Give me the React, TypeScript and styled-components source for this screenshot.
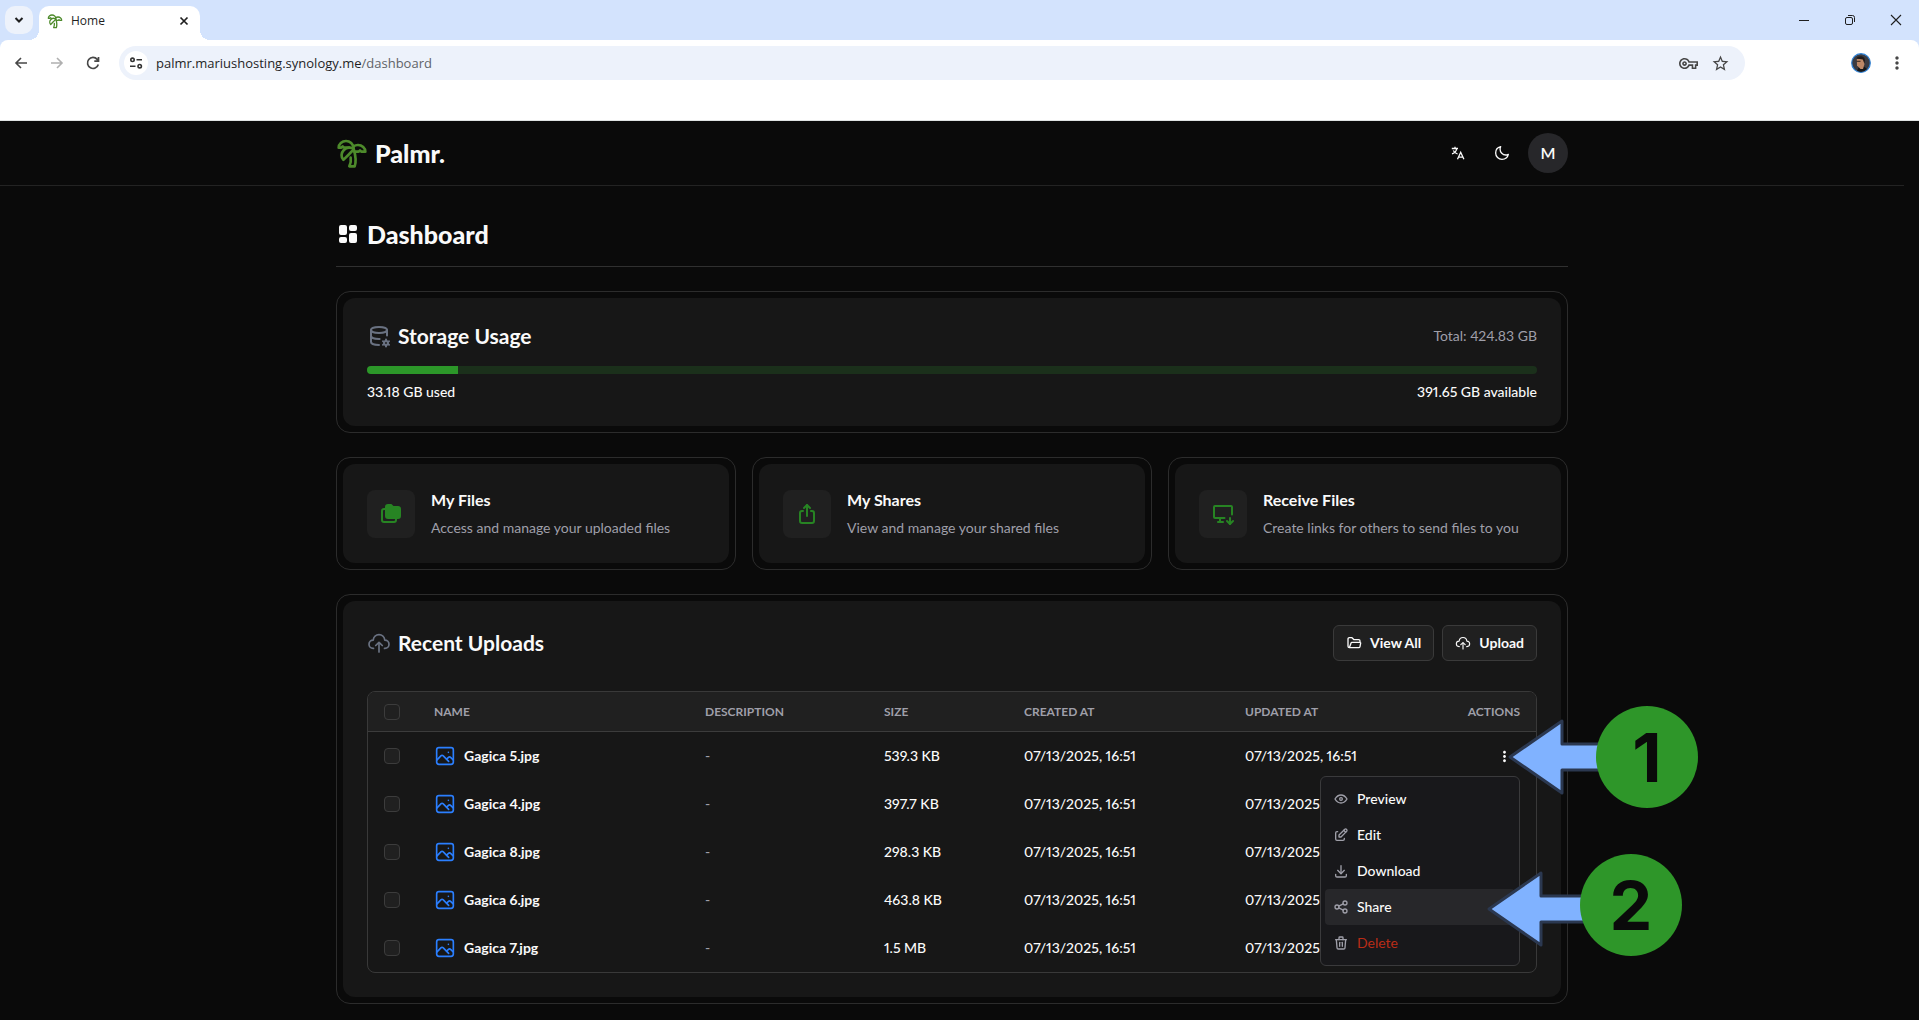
import React from "react";
import styled, { createGlobalStyle, css } from "styled-components";
import { TreePalm } from "lucide-react";
import {
  TbLayoutDashboardFilled, TbDatabaseCog, TbFoldersFilled, TbShare2, TbDeviceDesktopDown,
  TbFolderOpen, TbEye, TbEdit, TbDownload, TbShare, TbTrash,
} from "react-icons/tb";
import { MdOutlineVpnKey, MdStarBorder, MdMoreVert } from "react-icons/md";

const Global = createGlobalStyle`
  *, *::before, *::after { box-sizing: border-box; }
  html, body { margin: 0; background: #0a0a0a; }
  body { font-family: Lato, "Open Sans", sans-serif; font-variant-numeric: proportional-nums; font-size: 14px; line-height: 20px; color: #fafafa; }
  #root { min-height: 100vh; }
  button, input { font: inherit; color: inherit; }
  button { border: 0; background: none; padding: 0; margin: 0; cursor: pointer; }
  h1, h2, h3, p { margin: 0; }
  a { color: inherit; text-decoration: none; }
  svg { display: block; flex: none; }
`;

const Screen = styled.div`
  display: flex;
  flex-direction: column;
  min-height: 100vh;
`;

/* Browser frame */
const Browser = styled.div`
  background: #d3e3fd;
  color: #1f1f1f;
  font-family: "Open Sans", "Noto Sans", sans-serif;
`;
const TabStrip = styled.div`
  display: flex;
  align-items: flex-start;
  height: 40px;
  padding: 6px 5px 0;
`;
const TabSearch = styled.button`
  display: grid;
  place-items: center;
  width: 28px;
  height: 28px;
  border-radius: 10px;
  background: #edf2fb;
`;
const Tab = styled.div`
  position: relative;
  display: flex;
  align-items: center;
  gap: 8px;
  width: 161px;
  height: 34px;
  margin-left: 6px;
  padding: 0 8px 4px;
  border-radius: 10px 10px 0 0;
  background: #fff;
  font-size: 12px;
  line-height: 16px;
  &::before, &::after {
    content: "";
    position: absolute;
    bottom: 0;
    width: 10px;
    height: 10px;
  }
  &::before { left: -10px; background: radial-gradient(circle at 0 0, transparent 10px, #fff 10px); }
  &::after { right: -10px; background: radial-gradient(circle at 100% 0, transparent 10px, #fff 10px); }
`;
const TabTitle = styled.span`flex: 1;`;
const TabClose = styled.button`
  display: grid;
  place-items: center;
  width: 16px;
  height: 16px;
`;
const WindowButtons = styled.div`
  display: flex;
  gap: 22px;
  margin-left: auto;
  padding-right: 6px;
`;
const WindowButton = styled.button`
  display: grid;
  place-items: center;
  width: 24px;
  height: 28px;
`;
const Toolbar = styled.div`
  display: flex;
  align-items: center;
  height: 46px;
  padding: 0 12px 0 9px;
  border-radius: 8px 8px 0 0;
  background: #fff;
`;
const NavButtons = styled.div`
  display: flex;
  gap: 12px;
  padding-right: 14px;
`;
const NavButton = styled.button<{ $dim?: boolean }>`
  display: grid;
  place-items: center;
  width: 24px;
  height: 24px;
  color: ${(p) => (p.$dim ? "#b0b0b0" : "#474747")};
`;
const AddressBar = styled.div`
  display: flex;
  flex: 1;
  align-items: center;
  height: 34px;
  margin-right: 106px;
  padding: 0 15px 0 5px;
  border-radius: 17px;
  background: #edf2fb;
  color: #474747;
`;
const SiteInfo = styled.button`
  display: grid;
  place-items: center;
  width: 24px;
  height: 24px;
  margin-right: 8px;
  border-radius: 50%;
  background: #fff;
`;
const Url = styled.div`
  flex: 1;
  font-size: 13px;
  color: #1f1f1f;
  span { color: #5f6368; }
`;
const AddressIcons = styled.div`
  display: flex;
  align-items: center;
  gap: 13px;
`;
const ToolbarEnd = styled.div`
  display: flex;
  align-items: center;
  gap: 16px;
  color: #474747;
`;
const BookmarkBar = styled.div`
  height: 35px;
  background: #fff;
  border-bottom: 1px solid #dfe3e3;
`;

/* App */
const Page = styled.div`
  flex: 1;
  padding-right: 15px;
  background: #0a0a0a;
`;
const Container = styled.div`
  max-width: 1280px;
  margin: 0 auto;
  padding: 0 24px;
`;
const Header = styled.header`
  border-bottom: 1px solid #232323;
`;
const HeaderRow = styled(Container)`
  display: flex;
  align-items: center;
  justify-content: space-between;
  height: 64px;
`;
const Brand = styled.a`
  display: flex;
  align-items: center;
  gap: 7px;
  font-size: 25px;
  line-height: 32px;
  font-weight: 900;
`;
const HeaderActions = styled.div`
  display: flex;
  align-items: center;
  gap: 8px;
`;
const IconButton = styled.button`
  display: grid;
  place-items: center;
  width: 36px;
  height: 36px;
`;
const Avatar = styled.button`
  width: 40px;
  height: 40px;
  border-radius: 50%;
  background: #27272a;
  font-size: 16px;
  font-weight: 600;
`;
const Main = styled(Container).attrs({ as: "main" })`
  display: flex;
  flex-direction: column;
  gap: 24px;
  padding-top: 32px;
  padding-bottom: 16px;
`;
const TitleRow = styled.div`
  display: flex;
  align-items: center;
  gap: 7px;
  height: 49px;
  padding-bottom: 16px;
  border-bottom: 1px solid #303030;
  h1 { font-size: 25px; line-height: 32px; font-weight: 900; }
`;
const Card = styled.section`
  padding: 6px;
  border: 1px solid #2c2c2c;
  border-radius: 14px;
`;
const CardBody = styled.div`
  padding: 24px;
  border-radius: 12px;
  background: #171717;
`;
const CardHead = styled.div`
  display: flex;
  align-items: center;
  justify-content: space-between;
`;
const CardTitle = styled.h2`
  display: flex;
  align-items: center;
  gap: 7px;
  font-size: 21px;
  line-height: 28px;
  font-weight: 700;
  svg { color: #6a7282; }
`;
const Muted = styled.p`
  color: #9f9fa9;
  font-size: 14px;
  line-height: 20px;
`;
const Meter = styled.div`
  height: 8px;
  margin: 16px 0 8px;
  border-radius: 4px;
  background: #1b301b;
  overflow: hidden;
`;
const MeterFill = styled.div`
  height: 100%;
  background: #2c9729;
`;
const Legend = styled.div`
  display: flex;
  justify-content: space-between;
  font-weight: 500;
`;
const Shortcuts = styled.div`
  display: grid;
  grid-template-columns: repeat(3, 1fr);
  gap: 16px;
`;
const Shortcut = styled.a`
  display: flex;
  align-items: center;
  gap: 16px;
  h3 { font-size: 16px; line-height: 24px; font-weight: 700; margin-bottom: 4px; }
  p { line-height: 23px; }
`;
const Tile = styled.div`
  display: grid;
  place-items: center;
  width: 48px;
  height: 48px;
  border-radius: 8px;
  background: #202020;
  color: #278423;
`;
const ButtonRow = styled.div`
  display: flex;
  gap: 8px;
`;
const OutlineButton = styled.button`
  display: flex;
  align-items: center;
  gap: 8px;
  height: 36px;
  padding: 0 12px;
  border: 1px solid #3a3a3a;
  border-radius: 6px;
  background: #202020;
  font-weight: 700;
`;
const TableFrame = styled.div`
  position: relative;
  margin-top: 30px;
  border: 1px solid #393939;
  border-radius: 8px;
`;
const Table = styled.table`
  width: 100%;
  table-layout: fixed;
  border-collapse: separate;
  border-spacing: 0;
  th, td { padding: 0 16px; text-align: left; white-space: nowrap; }
  th:last-child, td:last-child { text-align: right; }
  thead tr { height: 40px; }
  th {
    border-bottom: 1px solid #3c3c3c;
    background: #202020;
    color: #9f9fa9;
    font-size: 12px;
    line-height: 16px;
    font-weight: 700;
  }
  th:first-child { border-top-left-radius: 7px; }
  th:last-child { border-top-right-radius: 7px; }
  tbody tr { height: 48px; }
  td { font-weight: 500; }
`;
const Col = styled.col<{ $w: number }>`
  ${(p) => p.$w > 0 && css`width: ${p.$w}px;`}
`;
const Check = styled.input.attrs({ type: "checkbox" })`
  appearance: none;
  display: block;
  width: 16px;
  height: 16px;
  margin: 0;
  border: 1px solid #3c3c3c;
  border-radius: 4px;
  background: #202020;
`;
const FileName = styled.span`
  display: flex;
  align-items: center;
  gap: 8px;
  font-weight: 700;
  svg { color: #2b7fff; }
`;
const Dash = styled.span`color: #9f9fa9;`;
const RowMenuButton = styled.button`
  display: inline-grid;
  place-items: center;
  width: 32px;
  height: 32px;
  vertical-align: middle;
`;
const Menu = styled.div`
  position: absolute;
  top: 84px;
  right: 16px;
  width: 200px;
  padding: 4px;
  border: 1px solid #3a3a3c;
  border-radius: 6px;
  background: #18181b;
`;
const MenuItem = styled.button<{ $active?: boolean; $danger?: boolean }>`
  display: flex;
  align-items: center;
  gap: 8px;
  width: 100%;
  height: 36px;
  padding: 0 8px;
  border-radius: 4px;
  background: ${(p) => (p.$active ? "#27272a" : "transparent")};
  color: ${(p) => (p.$danger ? "#b92c17" : "#fafafa")};
  font-weight: ${(p) => (p.$danger ? 400 : 500)};
  svg { color: #9f9fa9; }
`;
const Callout = styled.div<{ $top: number; $right: number }>`
  position: absolute;
  top: ${(p) => p.$top}px;
  right: ${(p) => p.$right}px;
  display: flex;
  align-items: center;
`;
const Disc = styled.div`
  display: grid;
  place-items: center;
  width: 102px;
  height: 102px;
  margin-left: -8px;
  border-radius: 50%;
  background: #2e9629;
  color: #0a0a0a;
  font-family: Inter, Roboto, sans-serif;
  font-size: 68px;
  line-height: 102px;
  font-weight: 700;
`;

const Arrow = ({ length, dy = 0 }: { length: number; dy?: number }) => (
  <svg width={length} height="102" viewBox={`0 0 ${length} 102`}>
    <path
      d="M2 51 L54 15 V38 H120 V64 H54 V87 Z"
      transform={`translate(0 ${dy})`}
      fill="#80b2ff" stroke="#2b3850" strokeWidth="3" strokeLinejoin="round"
    />
  </svg>
);

const CloudUpload = ({ size }: { size: number }) => (
  <svg width={size} height={size} viewBox="0 0 24 24" fill="none" stroke="currentColor" strokeWidth="1.7" strokeLinecap="round" strokeLinejoin="round">
    <path d="M17.5 17.4h.4c2.3 0 4.1-1.8 4.1-4.1s-1.8-4.2-4.2-4.2C17.400 6 15 3.700 12 3.700S6.600 6 6.200 9.100C3.800 9.100 2 11 2 13.300s1.800 4.100 4.100 4.100h.4" />
    <path d="M12 12v9" />
    <path d="M8.700 14.500 12 11.300l3.300 3.200" />
  </svg>
);

const ImageIcon = () => (
  <svg width="22" height="22" viewBox="0 0 24 24" fill="none" stroke="currentColor" strokeWidth="1.800" strokeLinecap="round" strokeLinejoin="round">
    <rect x="2.900" y="2.900" width="18.200" height="18.200" rx="2.500" />
    <circle cx="15.700" cy="8" r=".9" fill="currentColor" stroke="none" />
    <path d="M3 16.500 7.500 11.800c.8-.8 1.800-.8 2.600 0l5.900 6" />
    <path d="m13.800 15.300 1.700-1.600c1-.9 1.900-.9 2.900 0l2.600 2.500" />
  </svg>
);

const Moon = () => (
  <svg width="16" height="16" viewBox="0 0 24 24" fill="none" stroke="currentColor" strokeWidth="2" strokeLinejoin="round">
    <path d="M21.500 14.100c-1.200.6-2.500.9-3.800.9C13 15 9.100 11.100 9.100 6.300c0-1.400.3-2.700.9-3.800C5.500 3.500 2.500 7.400 2.500 12c0 5.200 4.300 9.500 9.500 9.500 4.600 0 8.500-3.100 9.500-7.400Z" />
  </svg>
);

const Translate = () => (
  <svg width="14" height="14" viewBox="0 0 14 14" fill="none" stroke="currentColor" strokeWidth="1.300">
    <path d="M.8 2.500H7M4 .8v1.700M5.700 2.500C5.400 5 3.600 7 1 7.900M2.300 4.500c.9 1.700 2.300 2.900 4.300 3.500" />
    <path d="M6.500 13.300 9.700 6.300l3.200 7M7.600 11.200h4.200" />
  </svg>
);

const Line = ({ d, size = 16, w = 2 }: { d: string; size?: number; w?: number }) => (
  <svg width={size} height={size} viewBox="0 0 16 16" fill="none" stroke="currentColor" strokeWidth={w}>
    <path d={d} />
  </svg>
);

const Profile = () => (
  <svg width="20" height="20" viewBox="0 0 20 20">
    <circle cx="10" cy="10" r="9.300" fill="#3b3b41" stroke="#3183d6" strokeWidth="1.200" />
    <path d="M6 17.500 8 14l5-.5 3 2.500a8.500 8.500 0 0 1-10 1.500Z" fill="#151719" />
    <path d="M5.800 6h7.400l.3 5-1.500 5H9.500L6 12.500Z" fill="#bd8866" />
    <path d="M5.500 5.500C6.500 2.500 14 2 14 7.500l-.5 3.500-1.700-4.500Z" fill="#211b1a" />
    <path d="M5.500 8.300h4" stroke="#352820" strokeWidth="1" />
  </svg>
);

const shortcuts = [
  { title: "My Files", text: "Access and manage your uploaded files", icon: <TbFoldersFilled size={24} /> },
  { title: "My Shares", text: "View and manage your shared files", icon: <TbShare2 size={24} /> },
  { title: "Receive Files", text: "Create links for others to send files to you", icon: <TbDeviceDesktopDown size={24} /> },
];

const files = [
  { name: "Gagica 5.jpg", size: "539.3 KB" },
  { name: "Gagica 4.jpg", size: "397.7 KB" },
  { name: "Gagica 8.jpg", size: "298.3 KB" },
  { name: "Gagica 6.jpg", size: "463.8 KB" },
  { name: "Gagica 7.jpg", size: "1.5 MB" },
];
const stamp = "07/13/2025, 16:51";

const used = 33.18;
const total = 424.83;

export default function App() {
  return (
    <Screen>
      <Global />
      <Browser>
        <TabStrip>
          <TabSearch aria-label="Search tabs"><Line d="M4.500 6 8 9.500 11.500 6" /></TabSearch>
          <Tab>
            <TreePalm size={16} color="#4d8a2b" />
            <TabTitle>Home</TabTitle>
            <TabClose aria-label="Close tab"><Line d="M4.500 4.500l7 7M11.500 4.500l-7 7" w={1.7} /></TabClose>
          </Tab>
          <WindowButtons>
            <WindowButton aria-label="Minimize"><Line d="M3 8.500h10" w={1} /></WindowButton>
            <WindowButton aria-label="Restore">
              <Line d="M5 5.500h4a1.500 1.500 0 0 1 1.500 1.500v4A1.500 1.500 0 0 1 9 12.500H5A1.500 1.500 0 0 1 3.500 11V7A1.500 1.500 0 0 1 5 5.500ZM6 3.500h4.500a2 2 0 0 1 2 2V10" w={1} />
            </WindowButton>
            <WindowButton aria-label="Close"><Line d="M3 3l10 10M13 3L3 13" w={1.1} /></WindowButton>
          </WindowButtons>
        </TabStrip>
        <Toolbar>
          <NavButtons>
            <NavButton aria-label="Back"><Line d="M14 8H3M8 3 3 8l5 5" w={1.6} /></NavButton>
            <NavButton aria-label="Forward" $dim><Line d="M2 8h11M8 3l5 5-5 5" w={1.6} /></NavButton>
            <NavButton aria-label="Reload"><Line d="M13.300 9.500A5.500 5.500 0 1 1 12.200 4.400L13.500 6M13.500 2v4.200H9.300" w={1.7} /></NavButton>
          </NavButtons>
          <AddressBar>
            <SiteInfo aria-label="Site information">
              <svg width="16" height="16" viewBox="0 0 16 16" fill="none" stroke="#333" strokeWidth="1.600">
                <circle cx="4.500" cy="4.800" r="1.700" /><path d="M8.500 4.800H14M2 11.200h5.500" /><circle cx="11.700" cy="11.200" r="1.700" />
              </svg>
            </SiteInfo>
            <Url>palmr.mariushosting.synology.me<span>/dashboard</span></Url>
            <AddressIcons><MdOutlineVpnKey size={19} /><MdStarBorder size={19} /></AddressIcons>
          </AddressBar>
          <ToolbarEnd><Profile /><MdMoreVert size={20} /></ToolbarEnd>
        </Toolbar>
        <BookmarkBar />
      </Browser>

      <Page>
        <Header>
          <HeaderRow>
            <Brand href="#"><TreePalm size={32} color="#4d8a2b" />Palmr.</Brand>
            <HeaderActions>
              <IconButton aria-label="Language"><Translate /></IconButton>
              <IconButton aria-label="Theme"><Moon /></IconButton>
              <Avatar>M</Avatar>
            </HeaderActions>
          </HeaderRow>
        </Header>
        <Main>
          <TitleRow>
            <TbLayoutDashboardFilled size={24} />
            <h1>Dashboard</h1>
          </TitleRow>

          <Card>
            <CardBody>
              <CardHead>
                <CardTitle><TbDatabaseCog size={24} />Storage Usage</CardTitle>
                <Muted>Total: {total} GB</Muted>
              </CardHead>
              <Meter><MeterFill style={{ width: `${(used / total) * 100}%` }} /></Meter>
              <Legend><span>{used} GB used</span><span>391.65 GB available</span></Legend>
            </CardBody>
          </Card>

          <Shortcuts>
            {shortcuts.map((s) => (
              <Card key={s.title}>
                <CardBody>
                  <Shortcut href="#">
                    <Tile>{s.icon}</Tile>
                    <div><h3>{s.title}</h3><Muted>{s.text}</Muted></div>
                  </Shortcut>
                </CardBody>
              </Card>
            ))}
          </Shortcuts>

          <Card>
            <CardBody>
              <CardHead>
                <CardTitle><CloudUpload size={24} />Recent Uploads</CardTitle>
                <ButtonRow>
                  <OutlineButton><TbFolderOpen size={16} />View All</OutlineButton>
                  <OutlineButton><CloudUpload size={16} />Upload</OutlineButton>
                </ButtonRow>
              </CardHead>
              <TableFrame>
                <Table>
                  <colgroup>
                    {[50, 271, 179, 140, 221, 0].map((w, i) => <Col key={i} $w={w} />)}
                  </colgroup>
                  <thead>
                    <tr>
                      <th><Check aria-label="Select all" /></th>
                      <th>NAME</th><th>DESCRIPTION</th><th>SIZE</th><th>CREATED AT</th><th>UPDATED AT</th><th>ACTIONS</th>
                    </tr>
                  </thead>
                  <tbody>
                    {files.map((f) => (
                      <tr key={f.name}>
                        <td><Check aria-label={`Select ${f.name}`} /></td>
                        <td><FileName><ImageIcon />{f.name}</FileName></td>
                        <td><Dash>-</Dash></td>
                        <td>{f.size}</td>
                        <td>{stamp}</td>
                        <td>{stamp}</td>
                        <td><RowMenuButton aria-label="Actions"><MdMoreVert size={17} /></RowMenuButton></td>
                      </tr>
                    ))}
                  </tbody>
                </Table>
                <Menu>
                  <MenuItem><TbEye size={16} />Preview</MenuItem>
                  <MenuItem><TbEdit size={16} />Edit</MenuItem>
                  <MenuItem><TbDownload size={16} />Download</MenuItem>
                  <MenuItem $active><TbShare size={16} />Share</MenuItem>
                  <MenuItem $danger><TbTrash size={16} />Delete</MenuItem>
                </Menu>
                <Callout $top={14} $right={-162}><Arrow length={96} /><Disc>1</Disc></Callout>
                <Callout $top={162} $right={-146}><Arrow length={101} dy={4} /><Disc>2</Disc></Callout>
              </TableFrame>
            </CardBody>
          </Card>
        </Main>
      </Page>
    </Screen>
  );
}
